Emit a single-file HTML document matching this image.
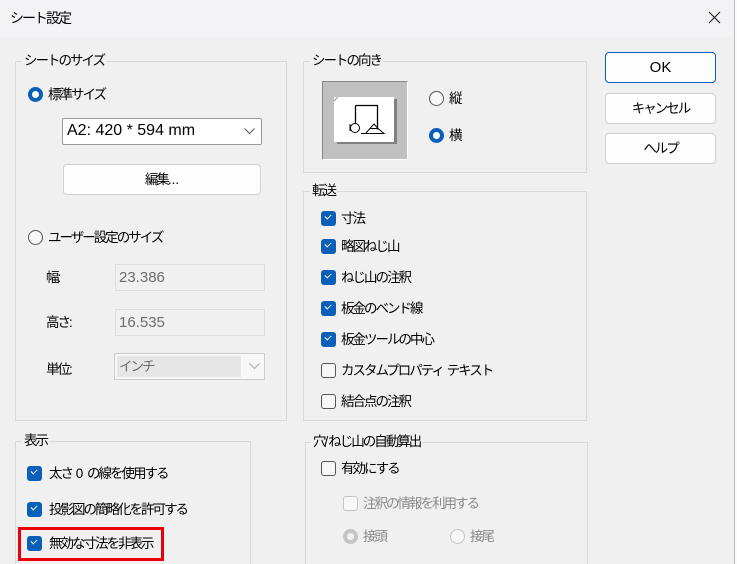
<!DOCTYPE html>
<html><head><meta charset="utf-8"><style>
*{box-sizing:border-box;margin:0;padding:0}
html,body{width:737px;height:564px;overflow:hidden}
body{background:#f0f0f0;font-family:"Liberation Sans","Noto Sans CJK JP",sans-serif;font-size:13.5px;letter-spacing:-2px;color:#000;position:relative}
.a{position:absolute}
.t{position:absolute;white-space:pre;line-height:16px}
.g{position:absolute;border:1px solid #d9d9d9}
.gl{position:absolute;background:#f0f0f0;padding:0 2px;line-height:16px;white-space:pre}
.cb{position:absolute;width:15px;height:15px;border-radius:3px;background:#0a5fb8}
.cb:after{content:"";position:absolute;left:4px;top:3px;width:5px;height:3px;border-left:1.3px solid #fff;border-bottom:1.3px solid #fff;transform:rotate(-45deg)}
.cu{position:absolute;width:15px;height:15px;border-radius:3px;border:1px solid #555;background:#f7f7f7}
.rb{position:absolute;width:15px;height:15px;border-radius:50%;background:#0a5fb8}
.rb:after{content:"";position:absolute;left:4px;top:4px;width:7px;height:7px;border-radius:50%;background:#fff}
.ru{position:absolute;width:15px;height:15px;border-radius:50%;border:1px solid #555;background:#f7f7f7}
.btn{position:absolute;border:1px solid #d0d0d0;border-radius:4px;background:#fdfdfd;text-align:center}
.fld{position:absolute;border:1px solid #dedede;background:#f0f0f0;color:#6d6d6d;padding-left:3px;letter-spacing:0}
.lat{letter-spacing:0}
</style></head><body>
<div class="a" style="left:0;top:0;width:737px;height:37px;background:#f3f3f6"></div>
<div class="t" style="left:10px;top:10px;font-size:14px">シート設定</div>
<svg class="a" style="left:708px;top:11px" width="13" height="13"><path d="M1 1L12 12M12 1L1 12" stroke="#222" stroke-width="1.2"/></svg>
<div class="a" style="left:734px;top:0;width:3px;height:564px;background:#fafafa;border-left:1px solid #bbb"></div>

<div class="g" style="left:15px;top:61px;width:272px;height:360px"></div>
<div class="gl" style="left:22px;top:53px">シートのサイズ</div>
<div class="rb" style="left:28px;top:87px"></div>
<div class="t" style="left:48px;top:87px">標準サイズ</div>
<div class="a" style="left:62px;top:118px;width:200px;height:27px;border:1px solid #999;background:#fff;border-radius:2px"></div>
<div class="t lat" style="left:67px;top:123px;font-size:16px;letter-spacing:0">A2: 420 * 594 mm</div>
<svg class="a" style="left:244px;top:128px" width="11" height="7"><path d="M0.5 0.5L5.5 5.5L10.5 0.5" fill="none" stroke="#555"/></svg>
<div class="btn" style="left:63px;top:164px;width:198px;height:31px;line-height:29px">編集<span class="lat">...</span></div>
<div class="ru" style="left:28px;top:230px"></div>
<div class="t" style="left:48px;top:230px">ユーザー設定のサイズ</div>
<div class="t" style="left:46px;top:270px">幅<span class="lat">:</span></div>
<div class="fld" style="left:115px;top:264px;width:150px;height:27px;line-height:25px;font-size:15px">23.386</div>
<div class="t" style="left:46px;top:315px">高さ<span class="lat">:</span></div>
<div class="fld" style="left:115px;top:309px;width:150px;height:27px;line-height:25px;font-size:15px">16.535</div>
<div class="t" style="left:46px;top:362px">単位<span class="lat">:</span></div>
<div class="a" style="left:114px;top:353px;width:151px;height:27px;border:1px solid #ccc;background:#f7f7f7"></div>
<div class="a" style="left:117px;top:356px;width:124px;height:21px;background:#e6e6e6;color:#6d6d6d;padding-left:2px;line-height:21px">インチ</div>
<svg class="a" style="left:249px;top:363px" width="11" height="7"><path d="M0.5 0.5L5.5 5.5L10.5 0.5" fill="none" stroke="#aaa"/></svg>

<div class="g" style="left:303px;top:61px;width:284px;height:112px"></div>
<div class="gl" style="left:310px;top:53px">シートの向き</div>
<div class="a" style="left:322px;top:81px;width:86px;height:79px;background:#c0c0c0;border-right:1px solid #fff;border-bottom:1px solid #fff;border-left:1px solid #888;border-top:1px solid #888"></div>
<div class="a" style="left:337px;top:99px;width:60px;height:45px;background:#808080"></div>
<div class="a" style="left:334px;top:97px;width:60px;height:45px;background:#fff"></div>
<svg class="a" style="left:334px;top:97px" width="60" height="45"><path d="M0 4L4 0" stroke="#999"/><path d="M21.5 8.5H43.5V32.5M21.5 8.5V26" fill="none" stroke="#000" stroke-width="1.3"/><circle cx="21" cy="31" r="4.5" fill="none" stroke="#000"/><path d="M16 27V34" stroke="#000"/><path d="M27 36.5H50L44 31.5H36L32 36" fill="none" stroke="#000"/><path d="M36 31.5L40 27L44 31.5" fill="none" stroke="#000"/></svg>
<div class="ru" style="left:429px;top:91px"></div>
<div class="t" style="left:449px;top:91px">縦</div>
<div class="rb" style="left:429px;top:128px"></div>
<div class="t" style="left:449px;top:128px">横</div>

<div class="g" style="left:303px;top:191px;width:284px;height:230px"></div>
<div class="gl" style="left:310px;top:183px">転送</div>
<div class="cb" style="left:321px;top:211px"></div><div class="t" style="left:341px;top:211px">寸法</div>
<div class="cb" style="left:321px;top:239px"></div><div class="t" style="left:341px;top:239px">略図ねじ山</div>
<div class="cb" style="left:321px;top:270px"></div><div class="t" style="left:341px;top:270px">ねじ山の注釈</div>
<div class="cb" style="left:321px;top:301px"></div><div class="t" style="left:341px;top:301px">板金のベンド線</div>
<div class="cb" style="left:321px;top:332px"></div><div class="t" style="left:341px;top:332px">板金ツールの中心</div>
<div class="cu" style="left:321px;top:363px"></div><div class="t" style="left:341px;top:363px">カスタムプロパティ<span class="lat"> </span>テキスト</div>
<div class="cu" style="left:321px;top:394px"></div><div class="t" style="left:341px;top:394px">結合点の注釈</div>

<div class="g" style="left:15px;top:441px;width:236px;height:140px"></div>
<div class="gl" style="left:22px;top:433px">表示</div>
<div class="cb" style="left:27px;top:466px"></div><div class="t" style="left:49px;top:466px">太さ<span class="lat"> 0 </span>の線を使用する</div>
<div class="cb" style="left:27px;top:502px"></div><div class="t" style="left:49px;top:502px">投影図の簡略化を許可する</div>
<div class="cb" style="left:27px;top:536px"></div><div class="t" style="left:49px;top:536px">無効な寸法を非表示</div>
<div class="a" style="left:18px;top:527px;width:146px;height:34px;border:3px solid #e8000b"></div>

<div class="g" style="left:305px;top:442px;width:283px;height:140px"></div>
<div class="gl" style="left:311px;top:434px">穴<span class="lat">/</span>ねじ山の自動算出</div>
<div class="cu" style="left:321px;top:461px"></div><div class="t" style="left:341px;top:461px">有効にする</div>
<div class="cu" style="left:343px;top:496px;border-color:#c4c4c4"></div><div class="t" style="left:363px;top:496px;color:#8a8a8a">注釈の情報を利用する</div>
<div class="a" style="left:343px;top:529px;width:15px;height:15px;border-radius:50%;background:#c4c4c4"></div><div class="a" style="left:347px;top:533px;width:7px;height:7px;border-radius:50%;background:#f0f0f0"></div>
<div class="t" style="left:363px;top:529px;color:#8a8a8a">接頭</div>
<div class="ru" style="left:450px;top:529px;border-color:#c4c4c4"></div><div class="t" style="left:470px;top:529px;color:#8a8a8a">接尾</div>

<div class="btn lat" style="left:605px;top:52px;width:111px;height:31px;line-height:29px;border:1px solid #0a5fb8;background:#fdfdfd;font-size:15px">OK</div>
<div class="btn" style="left:605px;top:93px;width:111px;height:31px;line-height:29px">キャンセル</div>
<div class="btn" style="left:605px;top:133px;width:111px;height:31px;line-height:29px">ヘルプ</div>
</body></html>
